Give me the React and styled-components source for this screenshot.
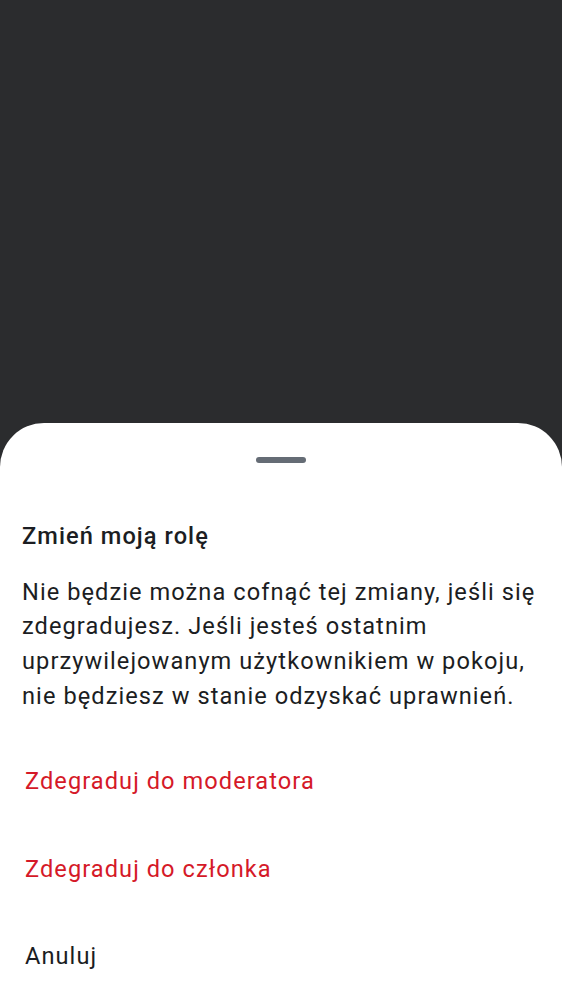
import React from "react"
import styled, {createGlobalStyle} from "styled-components"

const GlobalStyle = createGlobalStyle`
    html, body {
        margin: 0;
        padding: 0;
        background: #2b2c2e;
        font-family: Roboto, "Noto Sans", sans-serif;
    }
`

const Screen = styled.div`
    height: 1000px;
    display: flex;
    flex-direction: column;
    justify-content: flex-end;
    overflow: hidden;
`

const Sheet = styled.div`
    background: #ffffff;
    border-radius: 44px 44px 0 0;
    padding: 34px 0 0;
    display: flex;
    flex-direction: column;
`

const Handle = styled.div`
    align-self: center;
    width: 50px;
    height: 6px;
    border-radius: 3px;
    background: #656c75;
`

const Title = styled.h2`
    margin: 58px 22px 0;
    font-size: 23.6px;
    line-height: 30px;
    font-weight: 500;
    letter-spacing: 0.045em;
    color: #1b1d22;
`

const Body = styled.p`
    margin: 24px 22px 0;
    font-size: 23.6px;
    line-height: 34.7px;
    font-weight: 400;
    letter-spacing: 0.045em;
    color: #1b1d22;
`

const Actions = styled.div`
    margin-top: 24px;
    display: flex;
    flex-direction: column;
`

const Action = styled.button`
    height: 87.5px;
    padding: 0 25px;
    border: none;
    background: none;
    text-align: left;
    font-family: inherit;
    font-size: 23.6px;
    font-weight: 400;
    letter-spacing: 0.045em;
    color: ${props => (props.danger ? "#d51928" : "#1b1d22")};
`

export default function App() {
    return (
        <>
            <GlobalStyle />
            <Screen>
                <Sheet>
                    <Handle />
                    <Title>Zmień moją rolę</Title>
                    <Body>
                        Nie będzie można cofnąć tej zmiany, jeśli się zdegradujesz. Jeśli jesteś ostatnim
                        uprzywilejowanym użytkownikiem w pokoju, nie będziesz w stanie odzyskać uprawnień.
                    </Body>
                    <Actions>
                        <Action danger>Zdegraduj do moderatora</Action>
                        <Action danger>Zdegraduj do członka</Action>
                        <Action>Anuluj</Action>
                    </Actions>
                </Sheet>
            </Screen>
        </>
    )
}
